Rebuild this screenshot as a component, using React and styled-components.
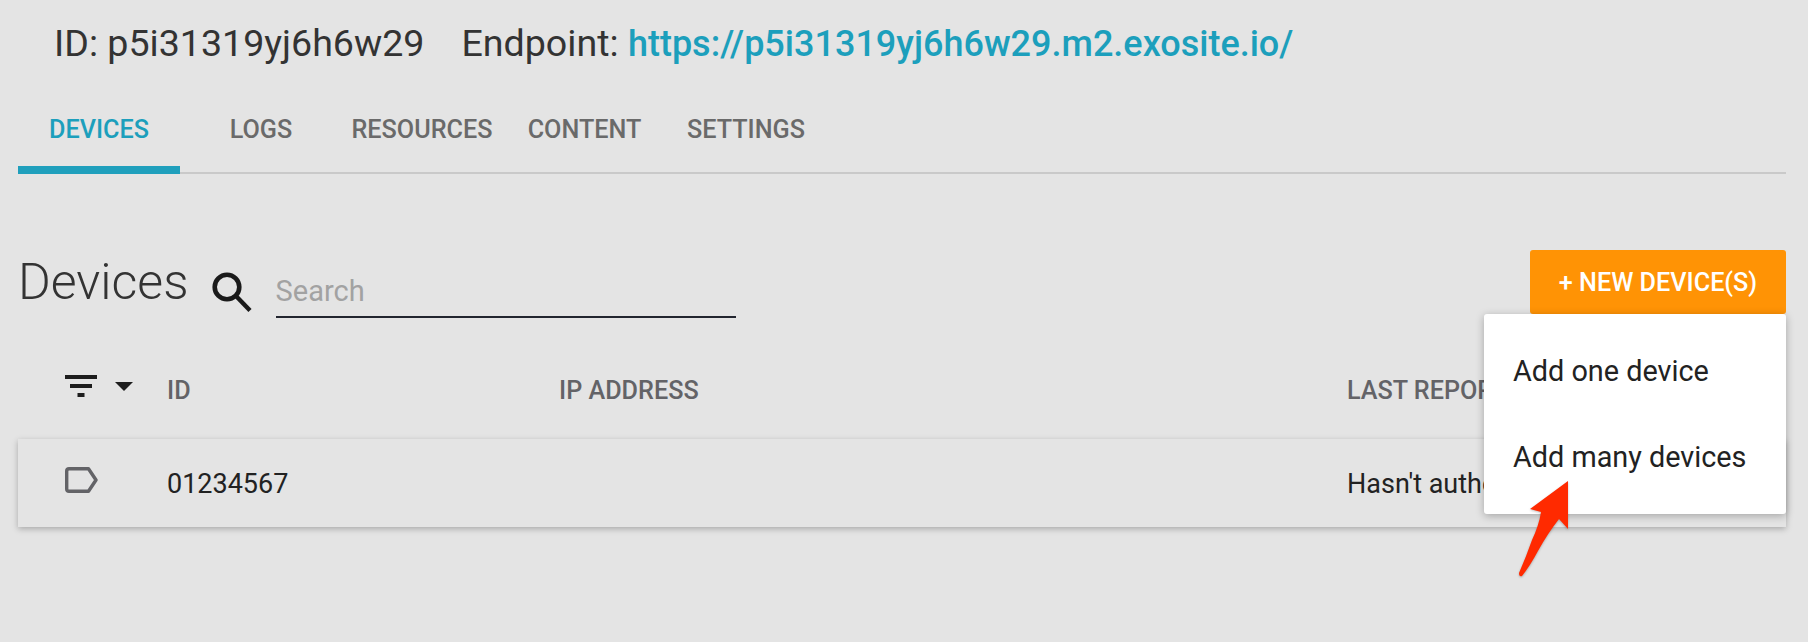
import React from "react";
import styled, { createGlobalStyle } from "styled-components";

const GlobalStyle = createGlobalStyle`
  html, body {
    margin: 0;
    background: #e4e4e4;
    font-family: Roboto, "Liberation Sans", sans-serif;
  }
`;

const Page = styled.div`
  position: relative;
  width: 1808px;
  height: 642px;
  overflow: hidden;
  padding: 0 22px 0 18px;
  box-sizing: border-box;
  background: #e4e4e4;
`;

const Header = styled.div`
  display: flex;
  align-items: center;
  height: 86px;
  padding-left: 36px;
  font-size: 37.6px;
  color: #333;
  white-space: nowrap;
`;

const Endpoint = styled.span`
  margin-left: 37px;
`;

const EndpointLink = styled.a`
  color: #1c9fbc;
  font-size: 36px;
  font-weight: 500;
`;

const Tabs = styled.nav`
  display: flex;
  height: 88px;
  border-bottom: 2px solid #c9c9c9;
  box-sizing: border-box;
`;

const Tab = styled.div`
  box-sizing: border-box;
  width: ${(p) => p.$width}px;
  height: 88px;
  padding-top: 29px;
  text-align: center;
  font-size: 25.2px;
  font-weight: 500;
  color: ${(p) => (p.$active ? "#1c9fbc" : "#6a6a6a")};
  border-bottom: ${(p) => (p.$active ? "8px solid #1f9fbc" : "none")};
`;

const Toolbar = styled.div`
  display: flex;
  align-items: flex-start;
  justify-content: space-between;
  margin-top: 76px;
  height: 64px;
`;

const SearchGroup = styled.div`
  display: flex;
  align-items: flex-start;
`;

const Title = styled.h1`
  margin: 0;
  font-size: 50px;
  line-height: 64px;
  font-weight: 300;
  color: #333;
`;

const SearchIcon = styled.svg`
  width: 44px;
  height: 44px;
  margin: 21px 0 0 21px;
  color: #1a1a1a;
`;

const SearchInput = styled.div`
  box-sizing: border-box;
  width: 460px;
  height: 68px;
  margin-left: 22px;
  padding-top: 24px;
  font-size: 29px;
  color: #a2a2a2;
  border-bottom: 2px solid #22252f;
`;

const NewButton = styled.button`
  width: 256px;
  height: 64px;
  padding: 0;
  border: 0;
  border-radius: 3px;
  background: #ff9305;
  color: #fff;
  font-family: inherit;
  font-size: 25.2px;
  font-weight: 500;
`;

const HeadRow = styled.div`
  display: flex;
  align-items: center;
  height: 66px;
  margin-top: 43px;
`;

const IconCell = styled.div`
  display: flex;
  align-items: center;
  width: 149px;
  padding: 0 0 ${(p) => p.$lift}px 47px;
  box-sizing: border-box;
`;

const Caret = styled.svg`
  margin-left: 18px;
`;

const Column = styled.div`
  width: ${(p) => p.$width}px;
  flex: none;
  white-space: nowrap;
`;

const HeadLabel = styled(Column)`
  font-size: 25.2px;
  font-weight: 500;
  color: #636367;
`;

const DeviceRow = styled.div`
  display: flex;
  align-items: center;
  box-sizing: border-box;
  height: 88px;
  margin-top: 16px;
  padding-top: 2px;
  background: #e4e4e4;
  box-shadow: 0 2px 6px rgba(0, 0, 0, 0.26);
  font-size: 27px;
  color: #222;
`;

const Menu = styled.div`
  position: absolute;
  left: 1484px;
  top: 314px;
  width: 302px;
  height: 200px;
  padding-top: 14px;
  box-sizing: border-box;
  background: #fff;
  border-radius: 3px;
  box-shadow: 0 2px 8px rgba(0, 0, 0, 0.28);
`;

const MenuItem = styled.div`
  height: 86px;
  line-height: 86px;
  padding-left: 29px;
  font-size: 28.8px;
  color: #222;
`;

const Arrow = styled.svg`
  position: absolute;
  left: 1510px;
  top: 475px;
  width: 70px;
  height: 110px;
  filter: drop-shadow(0 1px 1px rgba(0, 0, 0, 0.25));
`;

export default function App() {
  return (
    <Page>
      <GlobalStyle />
      <Header>
        <span>ID: p5i31319yj6h6w29</span>
        <Endpoint>
          Endpoint: <EndpointLink>https://p5i31319yj6h6w29.m2.exosite.io/</EndpointLink>
        </Endpoint>
      </Header>
      <Tabs>
        <Tab $active $width={162}>DEVICES</Tab>
        <Tab $width={162}>LOGS</Tab>
        <Tab $width={160}>RESOURCES</Tab>
        <Tab $width={165}>CONTENT</Tab>
        <Tab $width={158}>SETTINGS</Tab>
      </Tabs>
      <Toolbar>
        <SearchGroup>
          <Title>Devices</Title>
          <SearchIcon viewBox="0 0 44 44" fill="none" stroke="currentColor">
            <circle cx="17" cy="16" r="12.3" strokeWidth="4.6" />
            <path d="M26 25 L40 39.5" strokeWidth="4.4" />
          </SearchIcon>
          <SearchInput>Search</SearchInput>
        </SearchGroup>
        <NewButton>+ NEW DEVICE(S)</NewButton>
      </Toolbar>
      <HeadRow>
        <IconCell $lift={8}>
          <svg width="32" height="22" viewBox="0 0 32 22" fill="#1d1d1d">
            <rect x="0" y="0" width="32" height="4" />
            <rect x="5" y="9" width="22" height="4" />
            <rect x="12.5" y="18" width="7" height="4" />
          </svg>
          <Caret width="18" height="9" viewBox="0 0 18 9" fill="#1d1d1d">
            <path d="M0 0 H18 L9 9 Z" />
          </Caret>
        </IconCell>
        <HeadLabel $width={392}>ID</HeadLabel>
        <HeadLabel $width={788}>IP ADDRESS</HeadLabel>
        <HeadLabel>LAST REPORT</HeadLabel>
      </HeadRow>
      <DeviceRow>
        <IconCell $lift={8}>
          <svg width="33" height="26" viewBox="0 0 33 26" fill="none" stroke="#636367" strokeWidth="3.4" strokeLinejoin="round">
            <path d="M4 1.7 H23.5 L31 13 L23.5 24.3 H4 Q1.7 24.3 1.7 22 V4 Q1.7 1.7 4 1.7 Z" />
          </svg>
        </IconCell>
        <Column $width={392}>01234567</Column>
        <Column $width={788} />
        <Column>Hasn't authenticated</Column>
      </DeviceRow>
      <Menu>
        <MenuItem>Add one device</MenuItem>
        <MenuItem>Add many devices</MenuItem>
      </Menu>
      <Arrow viewBox="0 0 70 110">
        <path d="M58 6 L58 54 L49 44 Q38 58 28 76 Q20 91 12 101 Q9 102 9 98 Q16 82 22 65 Q29 50 31 37 L20 34 Z" fill="#ff2a00" />
      </Arrow>
    </Page>
  );
}
